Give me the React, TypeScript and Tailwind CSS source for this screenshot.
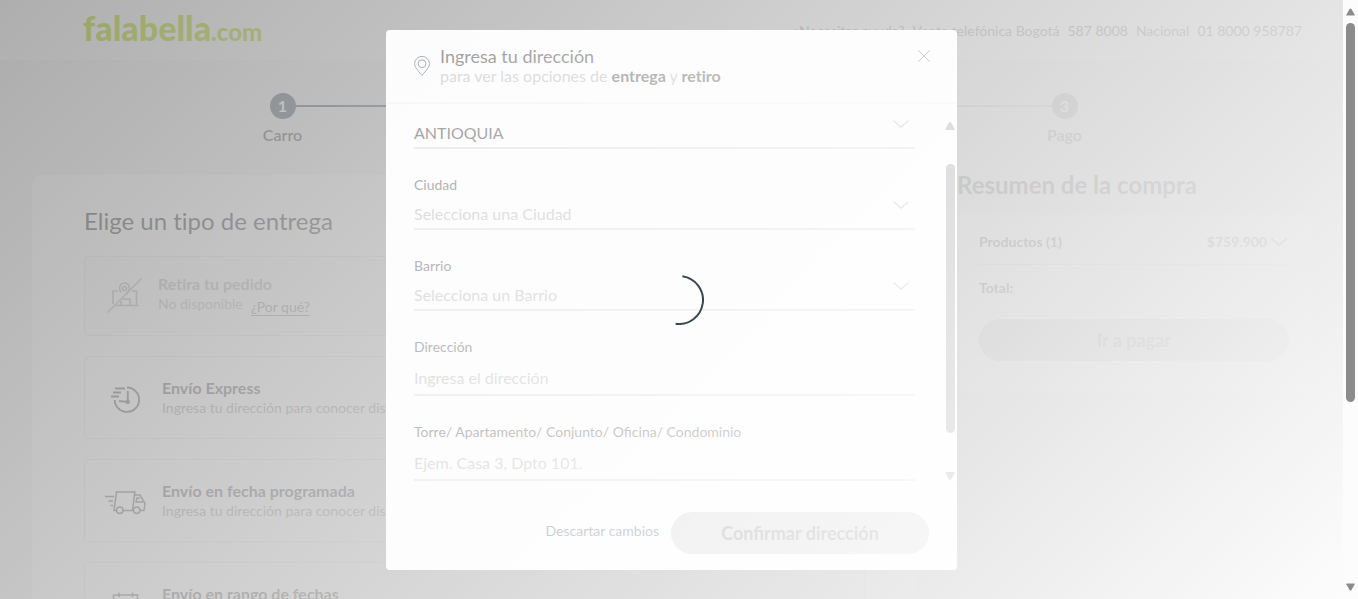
import type { ReactNode } from "react";

function Chevron({ className }: { className: string }) {
  return (
    <svg viewBox="0 0 16 8" width="16" height="8" fill="none" stroke="currentColor" strokeWidth="1.2" className={className} aria-hidden="true">
      <path d="M.5.5 8 7.3 15.5.5" />
    </svg>
  );
}

function StoreOffIcon() {
  return (
    <svg width="42" height="42" viewBox="0 0 42 42" fill="none" stroke="#a8a8a8" strokeWidth="1.6" aria-hidden="true">
      <path d="M13 14H8v13M27 14h4.500v14.500M11 28.500h22.500M16 28v-4M17 22h8v6.500" />
      <path d="M16 15.500c-1-1.700-1.500-3-1.500-4.500a5 5 0 0 1 10 0c0 2-1 4-3 6.500" />
      <circle cx="19.500" cy="11.500" r="2" />
      <path d="M2.500 35.500 36.500 1.500" strokeWidth="1.200" />
    </svg>
  );
}

function ExpressIcon() {
  return (
    <svg width="42" height="32" viewBox="0 0 42 32" fill="none" stroke="#4a4a4a" strokeWidth="1.900" aria-hidden="true">
      <path d="M22 3.500A12.200 12.200 0 1 1 9.700 16" />
      <path d="M22.800 7V18M14 17l9 1" />
      <path d="M10 4.500h10M8 8.500h8M6 12.500h8" />
      <circle cx="22.800" cy="18" r="1.200" />
    </svg>
  );
}

function TruckIcon() {
  return (
    <svg width="42" height="30" viewBox="0 0 42 30" fill="none" stroke="#4a4a4a" strokeWidth="1.500" aria-hidden="true">
      <path d="M11.500 22.500H9L11.500 4h18.300L27.500 22.500H18M27.500 22.500h.7M35 22.500h4l1-7-5-8.500h-5.500" />
      <path d="M35 10h-3l-1 4h7.500" />
      <circle cx="14.800" cy="22.300" r="3.200" />
      <circle cx="31.700" cy="22.300" r="3.200" />
      <path d="M0 8.500h9M3.500 13H8M5.500 17.500H8" />
    </svg>
  );
}

function CalendarIcon() {
  return (
    <svg width="42" height="30" viewBox="0 0 42 30" fill="none" stroke="#4a4a4a" strokeWidth="1.500" aria-hidden="true">
      <path d="M8.500 4h24v22h-24zM8.500 9h24M14 1.500V6M27.500 1.500V6M13 15h4M19 15h4M25 15h4" />
    </svg>
  );
}

function DeliveryOption({ icon, title }: { icon: ReactNode; title: string }) {
  return (
    <button type="button" className="mt-5 flex h-[83px] w-full items-start rounded border border-[#e6e6e6] text-left">
      <span className="flex w-[77px] items-center self-center pl-5 pt-1">{icon}</span>
      <span className="block pt-[21px]">
        <span className="block text-base leading-5 font-bold text-[#4a4a4a]">{title}</span>
        <span className="block text-sm leading-5 text-[#8c8c8c]">Ingresa tu dirección para conocer disponibilidad</span>
      </span>
    </button>
  );
}

function Step({ number, label, active }: { number: number; label: string; active?: boolean }) {
  return (
    <li className="flex w-16 flex-col items-center">
      <span className={`flex h-[26px] w-[26px] items-center justify-center rounded-full text-base font-bold text-white ${active ? "bg-[#495867]" : "bg-[#a8a8a8]"}`}>
        {number}
      </span>
      <span className={`mt-[6px] text-base leading-5 font-semibold ${active ? "text-[#4a4a4a]" : "text-[#858585]"}`}>{label}</span>
    </li>
  );
}

function Header() {
  return (
    <header className="flex h-[60px] items-center justify-between bg-[#fafafa] pr-[41px] pl-[83px]">
      <a href="#inicio" className="flex items-baseline leading-8 text-[#aad500]">
        <span className="text-[34px] font-black">falabella</span>
        <span className="text-2xl font-black">.com</span>
      </a>
      <p className="flex gap-2 pt-[2px] text-sm text-[#666]">
        <span>¿Necesitas ayuda?</span>
        <span>Venta telefónica Bogotá</span>
        <span className="text-[#4a4a4a]">587 8008</span>
        <span>Nacional</span>
        <span className="text-[#4a4a4a]">01 8000 958787</span>
      </p>
    </header>
  );
}

function Checkout() {
  return (
    <>
      <ol className="mx-auto mt-[33px] flex h-[82px] w-[850px] pl-1">
        <Step number={1} label="Carro" active />
        <li aria-hidden="true" className="-mx-[19px] mt-3 h-[2px] flex-1 bg-[#495867]" />
        <Step number={2} label="Entrega" active />
        <li aria-hidden="true" className="-mx-[19px] mt-3 h-[2px] flex-1 bg-[#c8c8c8]" />
        <Step number={3} label="Pago" />
      </ol>
      <main className="flex gap-10 px-8">
        <section className="w-[885px] rounded-xl bg-white px-[52px] pt-[30px] pb-8">
          <h1 className="text-2xl leading-8 text-[#333]">Elige un tipo de entrega</h1>
          <div className="mt-[19px] flex h-20 items-start rounded border border-[#e6e6e6] bg-[#fafafa]">
            <span className="w-[73px] pt-5 pl-5"><StoreOffIcon /></span>
            <div className="pt-[17px]">
              <p className="text-base leading-5 font-bold text-[#b0b0b0]">Retira tu pedido</p>
              <div className="flex items-start gap-2 text-sm text-[#b5b5b5]">
                <span className="leading-5">No disponible</span>
                <button type="button" className="mt-[5px] border-b border-[#8c8c8c] leading-4 text-[#8c8c8c]">¿Por qué?</button>
              </div>
            </div>
          </div>
          <DeliveryOption icon={<ExpressIcon />} title="Envío Express" />
          <DeliveryOption icon={<TruckIcon />} title="Envío en fecha programada" />
          <DeliveryOption icon={<CalendarIcon />} title="Envío en rango de fechas" />
        </section>
        <aside className="min-w-0 flex-1">
          <h2 className="text-2xl leading-5 font-bold text-[#666]">Resumen de la compra</h2>
          <div className="mt-5 rounded-lg bg-white px-[22px] pb-8">
            <div className="flex h-[50px] items-center justify-between border-b border-[#d8d8d8] pt-1 text-sm font-bold text-[#4a4a4a]">
              <span>Productos (1)</span>
              <span className="flex items-center gap-1 text-[#666]">
                $759.900
                <Chevron className="mr-[2px]" />
              </span>
            </div>
            <p className="pt-[13px] text-sm leading-5 font-bold text-[#4a4a4a]">Total:</p>
            <button type="button" className="mt-[21px] h-[42px] w-full rounded-full bg-[#cccccc] text-lg font-bold text-[#777]">
              Ir a pagar
            </button>
          </div>
        </aside>
      </main>
    </>
  );
}

function SelectField({ id, label, value, filled }: { id: string; label?: string; value: string; filled?: boolean }) {
  return (
    <div className="mb-[26px]">
      {label && <label htmlFor={id} className="mb-1 block text-sm leading-5 text-[#4a4a4a]">{label}</label>}
      <div className="relative">
        <select
          id={id}
          aria-label={label ?? "Departamento"}
          className={`block h-[31px] w-full appearance-none border-b-2 border-[#d8d8d8] bg-transparent pt-[2px] text-base outline-none ${filled ? "text-[#333]" : "text-[#b0b0b0]"}`}
        >
          <option>{value}</option>
        </select>
        <Chevron className="pointer-events-none absolute top-[2px] right-[6px] text-[#b0b0b0]" />
      </div>
    </div>
  );
}

function InputField({ id, label, placeholder }: { id: string; label: string; placeholder: string }) {
  return (
    <div className="mb-[26px]">
      <label htmlFor={id} className="mb-1 block text-sm leading-5 text-[#4a4a4a] [font-variant-ligatures:normal]">{label}</label>
      <input
        id={id}
        type="text"
        placeholder={placeholder}
        className="block h-[35px] w-full border-b-2 border-[#d8d8d8] bg-transparent text-base outline-none placeholder:text-[#b0b0b0]"
      />
    </div>
  );
}

function AddressDialog() {
  return (
    <div role="dialog" aria-labelledby="dialog-title" className="flex h-[540px] w-[571px] flex-col overflow-hidden rounded bg-[#fafafa]">
      <div className="flex h-[74px] items-start border-b-2 border-[#efefef] pt-4 pr-[23px] pl-7">
        <svg width="16" height="20" viewBox="0 0 16 20" fill="none" stroke="#495867" className="mt-[10px] mr-[10px]" aria-hidden="true">
          <path d="M8 19.300C3.500 14.300.6 11 .6 7.600a7.400 7.200 0 0 1 14.800 0C15.400 11 12.500 14.300 8 19.300Z" />
          <circle cx="8" cy="7.700" r="3.900" />
        </svg>
        <div className="flex-1">
          <h2 id="dialog-title" className="text-lg leading-5 text-[#333]">Ingresa tu dirección</h2>
          <p className="text-base leading-5 text-[#b0b0b0]">
            para ver las opciones de <strong className="text-[#4a4a4a]">entrega</strong> y <strong className="text-[#4a4a4a]">retiro</strong>
          </p>
        </div>
        <button type="button" aria-label="Cerrar" className="p-1">
          <svg width="12" height="12" viewBox="0 0 12 12" stroke="#5a5a5a" aria-hidden="true">
            <path d="M.5.5l11 11M11.500.5l-11 11" />
          </svg>
        </button>
      </div>
      <div className="flex h-[378px] overflow-hidden pl-7">
        <form className="flex-1 pt-[14px]">
          <SelectField id="departamento" value="ANTIOQUIA" filled />
          <SelectField id="ciudad" label="Ciudad" value="Selecciona una Ciudad" />
          <SelectField id="barrio" label="Barrio" value="Selecciona un Barrio" />
          <InputField id="direccion" label="Dirección" placeholder="Ingresa el dirección" />
          <InputField id="detalle" label="Torre/ Apartamento/ Conjunto/ Oficina/ Condominio" placeholder="Ejem. Casa 3, Dpto 101." />
        </form>
        <div aria-hidden="true" className="mr-[2px] ml-[30px] flex w-[10px] flex-col items-center pt-[18px] pb-[2px] text-[#8b8b8b]">
          <svg width="10" height="9" viewBox="0 0 10 9" fill="currentColor"><path d="M5 0q.7 0 1.100.7L9.600 7q.4 1-.6 1H1Q0 8 .4 7L3.900.7Q4.300 0 5 0Z" /></svg>
          <div className="mt-[33px] h-[269px] w-[9px] rounded-full bg-[#8b8b8b]" />
          <svg width="10" height="9" viewBox="0 0 10 9" fill="currentColor" className="mt-[38px] rotate-180"><path d="M5 0q.7 0 1.100.7L9.600 7q.4 1-.6 1H1Q0 8 .4 7L3.900.7Q4.300 0 5 0Z" /></svg>
        </div>
      </div>
      <div className="flex flex-1 items-start justify-end gap-3 pt-[30px] pr-7">
        <button type="button" className="h-[38px] text-sm text-[#495867]">Descartar cambios</button>
        <button type="button" className="h-[42px] w-[258px] rounded-full bg-[#cccccc] text-lg font-bold text-[#777] [font-variant-ligatures:normal]">
          Confirmar dirección
        </button>
      </div>
    </div>
  );
}

function PageScrollbar() {
  return (
    <div aria-hidden="true" className="flex w-[15px] shrink-0 flex-col items-center bg-[#fcfcfc] py-2 text-[#8b8b8b]">
      <svg width="9" height="8" viewBox="0 0 10 8" fill="currentColor"><path d="M5 0q.7 0 1.100.7L9.600 7q.4 1-.6 1H1Q0 8 .4 7L3.900.7Q4.300 0 5 0Z" /></svg>
      <div className="mt-[7px] h-[379px] w-[9px] rounded-full bg-[#8b8b8b]" />
      <svg width="9" height="8" viewBox="0 0 10 8" fill="currentColor" className="mt-auto rotate-180"><path d="M5 0q.7 0 1.100.7L9.600 7q.4 1-.6 1H1Q0 8 .4 7L3.900.7Q4.300 0 5 0Z" /></svg>
    </div>
  );
}

export default function App() {
  return (
    <div className="flex h-screen overflow-hidden font-['Lato',sans-serif] [font-variant-ligatures:none]">
      <div className="relative min-w-0 flex-1 overflow-hidden bg-[#f2f2f2]">
        <Header />
        <Checkout />
        <div className="absolute inset-0 flex items-center justify-center bg-black/50">
          <AddressDialog />
        </div>
        <div className="absolute inset-0 bg-[linear-gradient(135deg,rgba(255,255,255,0.38),rgba(255,255,255,0.98))]" />
        <div role="status" aria-label="Cargando" className="absolute inset-y-0 left-[50vw] flex -translate-x-1/2 items-center">
          <svg width="50" height="50" viewBox="0 0 50 50" fill="none" stroke="#3b4754" strokeWidth="2">
            <path d="M28.400 1.240A24 24 0 0 1 21.600 48.760" />
          </svg>
        </div>
      </div>
      <PageScrollbar />
    </div>
  );
}
